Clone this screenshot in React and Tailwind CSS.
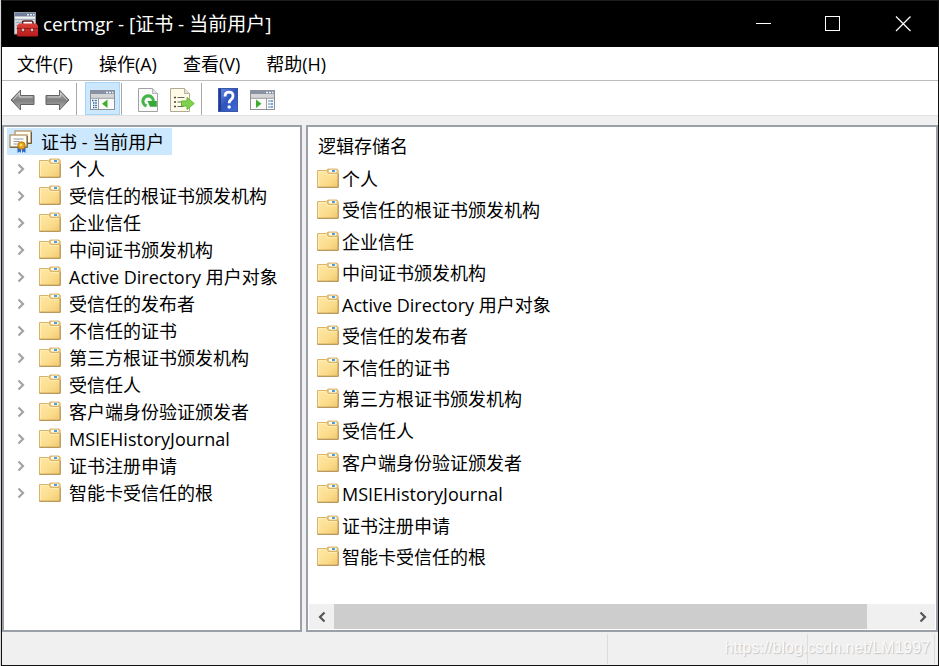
const stores = [
  "个人",
  "受信任的根证书颁发机构",
  "企业信任",
  "中间证书颁发机构",
  "Active Directory 用户对象",
  "受信任的发布者",
  "不信任的证书",
  "第三方根证书颁发机构",
  "受信任人",
  "客户端身份验证颁发者",
  "MSIEHistoryJournal",
  "证书注册申请",
  "智能卡受信任的根",
];

const menus = ["文件(F)", "操作(A)", "查看(V)", "帮助(H)"];

// shared gradients, referenced by id from the icons
const Gradients = () => (
  <svg width="0" height="0" className="absolute" aria-hidden="true">
    <defs>
      <linearGradient id="folder" x1="0" y1="0" x2="1" y2="1">
        <stop offset="0" stopColor="#ffe9a6" />
        <stop offset="0.6" stopColor="#fbdc8c" />
        <stop offset="1" stopColor="#f0c76c" />
      </linearGradient>
      <linearGradient id="arrow" x1="0" y1="0" x2="0" y2="1">
        <stop offset="0" stopColor="#c2c2c2" />
        <stop offset="0.5" stopColor="#808080" />
        <stop offset="1" stopColor="#b0b0b0" />
      </linearGradient>
      <linearGradient id="help" x1="0" y1="0" x2="1" y2="1">
        <stop offset="0" stopColor="#6b8ee6" />
        <stop offset="0.5" stopColor="#2f55bd" />
        <stop offset="1" stopColor="#3f6ad6" />
      </linearGradient>
      <linearGradient id="toolbox" x1="0" y1="0" x2="0" y2="1">
        <stop offset="0" stopColor="#d8403a" />
        <stop offset="1" stopColor="#b81a1a" />
      </linearGradient>
    </defs>
  </svg>
);

const FolderIcon = () => (
  <svg width="22" height="22" viewBox="0 0 22 22" className="shrink-0">
    <path d="M9.500 4 10.800 1h9.200l1.200 1.500V7H9.500z" fill="#e9c77c" stroke="#cfa75a" strokeWidth="0.8" />
    <rect x="12" y="1.800" width="7.500" height="2.600" rx="0.8" fill="#fffdf5" />
    <rect x="15" y="2" width="3" height="2" fill="#4a9fe0" />
    <path d="M0.500 2.500h9l2 3h9.700v13.800H0.500z" fill="url(#folder)" stroke="#d9b469" />
    <path d="M0.500 19.300h20.700V6" fill="none" stroke="#b08f55" />
    <path d="M1.500 18V3.600h7.400l2 3h9" fill="none" stroke="#fff0c0" strokeWidth="0.8" />
  </svg>
);

const AppIcon = () => (
  <svg width="24" height="25" viewBox="0 0 24 25" className="shrink-0">
    <rect x="0.500" y="0.500" width="21" height="21.500" fill="#d3d8dd" stroke="#8f9aa8" />
    <rect x="1" y="1" width="20" height="3.500" fill="#6f7f9b" />
    <path d="M13 2.700h2M16 2.700h2M19 2.700h1.500" stroke="#e9eef6" strokeWidth="1.400" />
    <path d="M1 5.500h20" stroke="#f2f4f7" strokeWidth="1.500" />
    <path d="M1 7.500h20" stroke="#a3adba" />
    <path d="M2 10.500h5M2 13.500h3M2 16.500h1.500" stroke="#9eb0c6" strokeWidth="1.500" />
    <rect x="9" y="8" width="11" height="4" fill="#fff" />
    <path d="M8.500 12V10.500q0-1.500 1.500-1.500h7.500q1.500 0 1.500 1.500V12" fill="none" stroke="#55181a" strokeWidth="1.600" />
    <path d="M5 11.500h17.500L24 14v9.500q0 1-1 1H4q-1 0-1-1V14z" fill="url(#toolbox)" />
    <path d="M3 16.500h21" stroke="#991414" />
    <circle cx="9" cy="18" r="2.200" fill="#8d1212" />
    <circle cx="18" cy="18" r="2.200" fill="#8d1212" />
    <circle cx="9" cy="18" r="1.400" fill="#cfc6c6" />
    <circle cx="18" cy="18" r="1.400" fill="#cfc6c6" />
  </svg>
);

const CertIcon = () => (
  <svg width="24" height="23" viewBox="0 0 24 23" className="shrink-0">
    <rect x="6" y="1" width="16" height="12" fill="#fffdf4" stroke="#b59b70" strokeWidth="1.400" />
    <path d="M22.500 2v11.500H16" fill="none" stroke="#6f5a38" />
    <rect x="1" y="5" width="17" height="12" fill="#fffdf4" stroke="#b59b70" strokeWidth="1.400" />
    <path d="M1 17.300h17.300V6" fill="none" stroke="#6f5a38" />
    <path d="M4.500 9h10M4.500 11.500h6M4.500 14h4" stroke="#8e9bb5" />
    <path d="M8.500 17.500v5.500l2-1.500 1.500 1.500v-5zM13 18v5l1.500-1.500L16.500 23v-5.500z" fill="#2e67c4" />
    <circle cx="12.500" cy="15.500" r="3.700" fill="#e2a11d" stroke="#bd7d0c" />
    <circle cx="12" cy="15" r="1.500" fill="#ffd562" />
  </svg>
);

const ArrowIcon = ({ forward }) => (
  <svg width="25" height="22" viewBox="0 0 25 22">
    <path
      d={forward ? "M24 11 14.500 1v5.500H1v9h13.500V21z" : "M1 11 10.500 1v5.500H24v9H10.500V21z"}
      fill="url(#arrow)"
      stroke="#636363"
      strokeLinejoin="round"
    />
    <path
      d={forward ? "M2.500 8H15.500V4L22 11" : "M22.500 8H9.500V4L3 11"}
      fill="none"
      stroke="#d2d2d2"
      strokeWidth="0.9"
    />
  </svg>
);

// window with a side pane; the pane sits left (tree) or right (actions)
const PaneIcon = ({ right }) => (
  <svg width="25" height="20" viewBox="0 0 25 20">
    <rect x="0.500" y="0.500" width="24" height="19" fill="#fbfbf8" stroke="#8e9196" />
    <rect x="1" y="1" width="23" height="3" fill="#8792a6" />
    <path d="M16 2.500h2M19 2.500h2M22 2.500h1.300" stroke="#f4f7fb" strokeWidth="1.300" />
    <rect x="1" y="4" width="23" height="4" fill="#d5d6d6" />
    <path d="M1 8.300h23" stroke="#9a9da1" />
    {right ? (
      <>
        <path d="M16.500 8v11" stroke="#9a9da1" />
        <path d="M18.500 11h1M18.500 14h1M18.500 17h1" stroke="#2b5f9e" strokeWidth="1.300" />
        <path d="M20.500 11h2.500M20.500 14h2.500M20.500 17h2.500" stroke="#4c87c8" strokeWidth="1.300" />
        <path d="M6 9.500v8.500l5.500-4.200z" fill="#3fae2e" />
      </>
    ) : (
      <>
        <path d="M8.500 8v11" stroke="#9a9da1" />
        <path d="M2 10.500h1.500M3 13h1M3 15.300h1M3 17.500h1" stroke="#2b5f9e" strokeWidth="1.300" />
        <path d="M4.500 10.500h2.500M4.500 13h2.500M4.500 15.300h2.500M4.500 17.500h2.500" stroke="#4c87c8" strokeWidth="1.300" />
        <path d="M17.500 9.500v8.500L12 13.800z" fill="#3fae2e" />
      </>
    )}
  </svg>
);

const RefreshIcon = () => (
  <svg width="20" height="24" viewBox="0 0 20 24">
    <path d="M0.500 0.500h14l5 5v18H0.500z" fill="#fafafa" stroke="#a2a2a2" />
    <path d="M14.500 0.500v5h5" fill="#e4e4e4" stroke="#b5b5b5" />
    <path d="M8.500 18A5.200 5.200 0 1 1 15.300 13.500" fill="none" stroke="#45b549" strokeWidth="3.200" />
    <path d="M9.500 13h9.300v5.800H12z" fill="#35a83a" />
  </svg>
);

const ExportIcon = () => (
  <svg width="25" height="24" viewBox="0 0 25 24">
    <path d="M0.500 0.500h14l5 5v18H0.500z" fill="#fffbe6" stroke="#b0aa95" />
    <path d="M14.500 0.500v5h5" fill="#eae5d2" stroke="#b5b0a0" />
    <path d="M4 9.500h2M4 14h2M4 18.500h2" stroke="#444" strokeWidth="1.500" />
    <path d="M7.500 9.500h7M7.500 14h4M7.500 18.500h6" stroke="#666" />
    <path d="M11.500 13h5.500V9.500l7.200 6-7.200 6V18h-5.500z" fill="#7fd24b" stroke="#5fb83a" />
  </svg>
);

const HelpIcon = () => (
  <svg width="20" height="24" viewBox="0 0 20 24">
    <rect x="0.500" y="0.500" width="19" height="23" fill="url(#help)" stroke="#3a56a6" />
    <path d="M2 1v22" stroke="#1f3c94" strokeWidth="2" />
    <path
      d="M7 8.500q0-4.300 4-4.300t4 3.800q0 2-2 3.600-1.800 1.400-1.800 3.700"
      fill="none"
      stroke="#fff"
      strokeWidth="2.800"
    />
    <circle cx="11.200" cy="19" r="1.700" fill="#fff" />
  </svg>
);

const ToolButton = ({ label, active, children }) => (
  <button
    type="button"
    aria-label={label}
    className={`flex h-[33px] w-[35px] items-center justify-center border pt-[3px] ${
      active ? "border-[#a6d5fa] bg-[#cce8ff]" : "border-transparent"
    }`}
  >
    {children}
  </button>
);

const Separator = () => <div className="ml-px mr-2 h-[32px] w-px bg-[#a9a9a9]" />;

const Chevron = ({ left }) => (
  <svg width="8" height="12" viewBox="0 0 8 12">
    <path
      d={left ? "M6.500 1.500 2 6l4.500 4.500" : "M1.500 1.500 6 6l-4.500 4.500"}
      fill="none"
      stroke="currentColor"
      strokeWidth="2.200"
    />
  </svg>
);

const TitleBar = () => (
  <header className="flex h-[47px] shrink-0 items-center border-t border-[#1c1c1c] bg-black pl-3 text-white">
    <AppIcon />
    <h1 className="ml-[5px] flex-1 text-[19px]">certmgr - [证书 - 当前用户]</h1>
    <button type="button" aria-label="最小化" className="flex h-full w-[70px] items-center justify-center">
      <svg width="16" height="16" viewBox="0 0 16 16">
        <path d="M1 7.500h15" stroke="#fff" />
      </svg>
    </button>
    <button type="button" aria-label="最大化" className="flex h-full w-[70px] items-center justify-center">
      <svg width="16" height="16" viewBox="0 0 16 16">
        <rect x="0.500" y="0.500" width="14" height="14" fill="none" stroke="#fff" />
      </svg>
    </button>
    <button type="button" aria-label="关闭" className="flex h-full w-[70px] items-center justify-center">
      <svg width="16" height="16" viewBox="0 0 16 16">
        <path d="m1 0.500 14.500 14.500M15.500 0.500 1 15" stroke="#fff" strokeWidth="1.200" />
      </svg>
    </button>
  </header>
);

const Tree = () => (
  <nav className="w-[300px] shrink-0 overflow-hidden border-2 border-[#9b9fa7] bg-white px-[3px] py-px">
    <button
      type="button"
      className="flex h-[27px] items-center gap-2 bg-[#cce8ff] pl-[2px] pr-2"
    >
      <CertIcon />
      证书 - 当前用户
    </button>
    <ul>
      {stores.map((name) => (
        <li key={name} className="flex h-[27px] items-center pl-[10px]">
          <button type="button" aria-label={`展开 ${name}`} className="mr-[14px] pt-px text-[#a3a3a3]">
            <Chevron />
          </button>
          <FolderIcon />
          <span className="ml-2 whitespace-nowrap">{name}</span>
        </li>
      ))}
    </ul>
  </nav>
);

const StoreList = () => (
  <main className="flex min-w-0 flex-1 flex-col justify-between border-2 border-[#9b9fa7] bg-white px-px pb-px pt-[2px]">
    <table className="h-[444px] w-full">
      <thead>
        <tr className="h-[34px]">
          <th className="pl-[9px] text-left font-normal">逻辑存储名</th>
        </tr>
      </thead>
      <tbody>
        {stores.map((name) => (
          <tr key={name}>
            <td className="p-0 pl-2">
              <div className="flex items-center gap-[3px]">
                <FolderIcon />
                {name}
              </div>
            </td>
          </tr>
        ))}
      </tbody>
    </table>

    <div className="flex h-[25px] bg-[#f0f0f0] text-[#555]">
      <button type="button" aria-label="向左滚动" className="flex w-[25px] items-center justify-center">
        <Chevron left />
      </button>
      <div className="flex flex-1">
        <div className="flex-[37] bg-[#cdcdcd]" />
        <div className="flex-[3]" />
      </div>
      <button type="button" aria-label="向右滚动" className="flex w-[25px] items-center justify-center">
        <Chevron />
      </button>
    </div>
  </main>
);

const StatusBar = () => (
  <footer className="relative flex h-[33px] shrink-0 pb-px pr-[3px] pt-[2px]">
    <div className="flex-1 border-r border-[#dcdcdc]" />
    <div className="w-[200px] border-r border-[#dcdcdc]" />
    <div className="w-[127px] border-r border-[#dcdcdc]" />
    <span className="absolute right-2 top-1 font-['Liberation_Sans',sans-serif] text-[16px] leading-6 text-[#fafafa] [text-shadow:1px_1px_1px_#c4c4c4]">
      https://blog.csdn.net/LM1997
    </span>
  </footer>
);

const App = () => {
  return (
    <div className="h-screen bg-[#d8d8d8] pl-px">
      <Gradients />
      <div className="flex h-full flex-col overflow-hidden border-x border-b border-[#111] bg-[#f0f0f0] font-['Open_Sans','Noto_Sans_CJK_SC',sans-serif] text-[18px] leading-[26px] text-black">
        <TitleBar />
        <nav className="flex h-[34px] shrink-0 items-center gap-[26px] border-b border-[#bcbcbc] bg-white pl-[15px]">
          {menus.map((menu) => (
            <button key={menu} type="button">
              {menu}
            </button>
          ))}
        </nav>
        <div className="flex h-[35px] shrink-0 items-end border-b border-[#e3e3e3] bg-white pl-[3px]">
          <ToolButton label="后退">
            <ArrowIcon />
          </ToolButton>
          <ToolButton label="前进">
            <ArrowIcon forward />
          </ToolButton>
          <Separator />
          <ToolButton label="显示/隐藏控制台树" active>
            <PaneIcon />
          </ToolButton>
          <Separator />
          <ToolButton label="刷新">
            <RefreshIcon />
          </ToolButton>
          <ToolButton label="导出列表">
            <ExportIcon />
          </ToolButton>
          <Separator />
          <ToolButton label="帮助">
            <HelpIcon />
          </ToolButton>
          <ToolButton label="显示/隐藏操作窗格">
            <PaneIcon right />
          </ToolButton>
        </div>
        <div className="flex min-h-0 flex-1 gap-1 pt-[9px]">
          <Tree />
          <StoreList />
        </div>
        <StatusBar />
      </div>
    </div>
  );
};

export default App;
